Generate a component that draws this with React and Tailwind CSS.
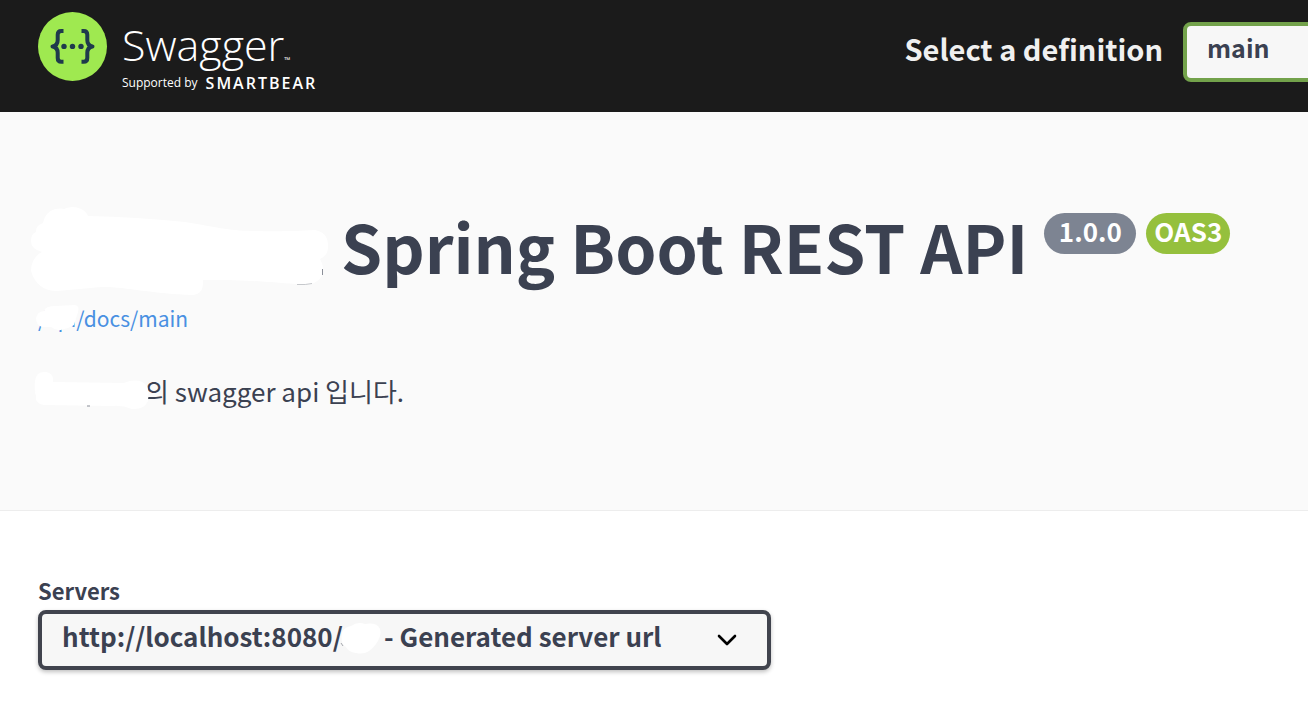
import React from "react";

function SwaggerMark() {
  return (
    <svg className="h-[70px] w-[70px] shrink-0" viewBox="0 0 70 70" aria-hidden="true">
      <circle cx="34.5" cy="34.5" r="34.5" fill="#9fe950" />
      <g fill="none" stroke="#1f3a4c" strokeWidth="4" strokeLinejoin="round">
        <path d="M25.5 19h-2.2q-3.6 0-3.6 3.8v5.2q0 5.6-5.2 6.4q5.2.8 5.2 6.4v5.2q0 3.8 3.6 3.8h2.2" />
        <path d="M43.5 19h2.2q3.6 0 3.6 3.8v5.2q0 5.6 5.2 6.4q-5.2.8-5.2 6.4v5.2q0 3.8-3.6 3.8h-2.2" />
      </g>
      <g fill="#1f3a4c">
        <circle cx="26" cy="34.4" r="2.7" />
        <circle cx="34.5" cy="34.4" r="2.7" />
        <circle cx="43" cy="34.4" r="2.7" />
      </g>
    </svg>
  );
}

function Logo() {
  return (
    <a href="#" className="flex gap-[14px] pt-3 font-['Open_Sans',sans-serif] text-white">
      <SwaggerMark />
      <span className="flex flex-col pt-2">
        <span className="flex items-end text-[43px] leading-[50px] font-light">
          Swagger
          <span className="text-[8px] leading-[20px] font-normal">™</span>
        </span>
        <span className="flex items-center gap-2 leading-[26px] whitespace-nowrap">
          <span className="text-[12px]">Supported by</span>
          <span className="text-[16px] font-semibold tracking-[2px]">SMARTBEAR</span>
        </span>
      </span>
    </a>
  );
}

function Topbar() {
  return (
    <header className="flex h-28 items-start justify-between bg-[#1b1b1b] pl-[38px]">
      <Logo />
      <div className="-mr-[131px] flex shrink-0 items-start gap-5 pt-[22px]">
        <label htmlFor="definition" className="text-[29px] leading-[52px] font-bold text-[#f0f0f0]">
          Select a definition
        </label>
        <select
          id="definition"
          className="h-[60px] w-64 appearance-none rounded-lg border-4 border-[#73a24b] bg-[#f7f7f7] px-5 pb-2 text-[25px] font-bold text-[#3b4151]"
        >
          <option>main</option>
        </select>
      </div>
    </header>
  );
}

function Info() {
  return (
    <section className="border-b border-[#ededed] bg-[#fafafa] px-[38px] pt-[93px] pb-[97px]">
      <h1 className="-ml-[7px] flex items-start text-[66px] leading-[80px] font-bold whitespace-nowrap text-[#3b4151]">
        <svg className="mr-3 h-[91px] w-[298px] shrink-0" viewBox="0 0 298 91" aria-hidden="true">
          <path
            fill="#fff"
            d="M12 18Q14 7 24 4Q30 3 33 4Q42 0 50 4Q55 6 57 11Q105 12 154 17C190 23 200 26 225 26Q255 27 284 25Q296 27 297 39Q298 50 289 54Q293 62 292 67Q290 77 279 79H265C235 77 225 75 172 75Q173 89 162 90C115 89 85 79 60 83L26 86Q6 86 0 66Q0 53 11 47Q0 44 0 36Q0 29 5 27Q4 21 12 18Z"
          />
          <path fill="none" stroke="#c6c8cc" strokeWidth="1" d="M266 79.5Q275 80 281 78.5" />
          <path fill="none" stroke="#8b8f98" strokeWidth="1" d="M291.5 64v6" />
        </svg>
        <span>Spring Boot REST API</span>
        <span className="ml-4 flex gap-[10px] pt-2 text-[26px] leading-[36px] text-white">
          <span className="flex h-[41px] w-[92px] justify-center rounded-full bg-[#7d8492]">1.0.0</span>
          <span className="flex h-[41px] w-[84px] justify-center rounded-full bg-[#95c03d]">OAS3</span>
        </span>
      </h1>
      <div className="relative mt-[5px] flex h-8">
        <a href="#" className="text-[21px] leading-[34px] text-[#4990e2]">
          /api/docs/main
        </a>
        <svg className="absolute top-[2px] -left-1 h-8 w-12" viewBox="0 0 48 32" aria-hidden="true">
          <path fill="#fff" d="M2 15Q3 9 10 8Q11 3 22 3L41 2Q46 3 44 9L40 22Q35 25 30 26Q24 29 17 24L8 24Q2 22 2 15Z" />
        </svg>
      </div>
      <p className="-ml-1 mt-9 flex h-[44px] items-center text-[26px] leading-[44px] text-[#3b4151]">
        <svg className="z-10 -mr-1 h-10 w-[115px]" viewBox="0 0 115 40" aria-hidden="true">
          <path fill="#fff" d="M1 10Q2 0 12 1Q20 2 19 11L90 12Q105 6 113 15Q115 20 114 30Q110 39 98 38Q88 34 78 35L10 34Q1 33 2 25Q0 19 1 10Z" />
          <path fill="#8b8f98" d="M53 34.5h3v1h-3z" />
        </svg>
        의 swagger api 입니다.
      </p>
    </section>
  );
}

function Servers() {
  return (
    <section className="bg-white px-[38px] pt-16 pb-10 text-[#3b4151]">
      <label htmlFor="server" className="block text-[22px] leading-[30px] font-bold">
        Servers
      </label>
      <div className="relative mt-[5px] w-[733px] max-w-full">
        <select
          id="server"
          className="h-[60px] w-full appearance-none rounded-lg border-4 border-[#41444e] bg-[#f7f7f7] pr-16 pb-[10px] pl-5 text-[26px] font-bold shadow-[0_2px_4px_rgba(0,0,0,0.25)]"
        >
          <option>{"http://localhost:8080/" + "\u00a0".repeat(7) + "- Generated server url"}</option>
        </select>
        <svg className="pointer-events-none absolute top-3 left-[300px] h-8 w-11" viewBox="0 0 44 32" aria-hidden="true">
          <path fill="#fff" d="M4 10Q7 5 13 4Q20-1 27 2Q39 0 42 7Q44 14 38 22Q30 34 18 31Q10 30 8 25Q2 22 4 10Z" />
          <path fill="none" stroke="#a5a8ae" d="M3 21l2 3" />
        </svg>
        <svg className="pointer-events-none absolute top-[24px] right-[34px] h-3 w-5" viewBox="0 0 20 12" aria-hidden="true">
          <path fill="none" stroke="#000" strokeWidth="2.6" strokeLinecap="round" strokeLinejoin="round" d="M2 2l8 8l8-8" />
        </svg>
      </div>
    </section>
  );
}

export default function App() {
  return (
    <div className="min-h-screen overflow-hidden bg-white font-['Noto_Sans_CJK_KR',sans-serif]">
      <Topbar />
      <main>
        <Info />
        <Servers />
      </main>
    </div>
  );
}
